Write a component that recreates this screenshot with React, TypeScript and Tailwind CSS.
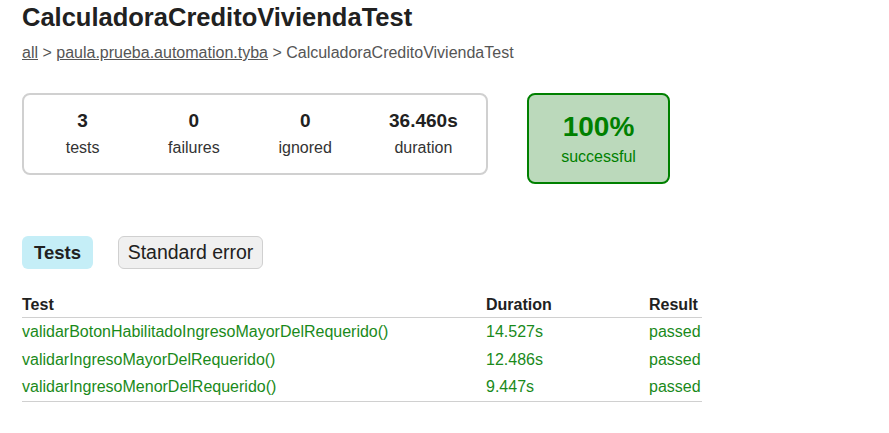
import React from 'react';

const counters = [
    { value: '3', label: 'tests', w: 'w-[112px]' },
    { value: '0', label: 'failures', w: 'w-[112px]' },
    { value: '0', label: 'ignored', w: 'w-[112px]' },
    { value: '36.460s', label: 'duration', w: 'w-[126px]' },
];

const rows = [
    { name: 'validarBotonHabilitadoIngresoMayorDelRequerido()', duration: '14.527s' },
    { name: 'validarIngresoMayorDelRequerido()', duration: '12.486s' },
    { name: 'validarIngresoMenorDelRequerido()', duration: '9.447s' },
];

const App: React.FC = () => {
    return (
        <div className="min-h-[433px] w-[889px] bg-white pl-[22px] text-[#212121] font-['Liberation_Sans',Arial,sans-serif]">
            {/* Header */}
            <h1 className="pt-[2px] text-[25.5px] font-bold leading-[30px]">CalculadoraCreditoViviendaTest</h1>
            <div className="mt-[11px] text-[16px] leading-[20px] text-[#555]">
                <a className="underline">all</a> &gt; <a className="underline">paula.prueba.automation.tyba</a> &gt; CalculadoraCreditoViviendaTest
            </div>

            {/* Summary */}
            <div className="mt-[30px] flex items-start gap-[39px]">
                <div className="flex h-[82px] w-[466px] items-center rounded-[8px] border-2 border-[#d0d0d0] pl-[3px]">
                    {counters.map((c) => (
                        <div key={c.label} className={`${c.w} text-center`}>
                            <div className="text-[19px] font-bold leading-[22px]">{c.value}</div>
                            <div className="mt-[6px] text-[16px] leading-[20px] text-[#333]">{c.label}</div>
                        </div>
                    ))}
                </div>
                <div className="flex h-[91px] w-[143px] flex-col items-center justify-center rounded-[8px] border-2 border-[#008000] bg-[#bbd9bb] text-[#008000]">
                    <div className="text-[28px] font-bold leading-[32px]">100%</div>
                    <div className="mt-[4px] text-[16px] leading-[20px]">successful</div>
                </div>
            </div>

            {/* Tabs */}
            <div className="mt-[52px] flex gap-[25px]">
                <div className="flex h-[33px] w-[71px] items-center justify-center rounded-[6px] bg-[#c5eef7] text-[18.5px] font-bold">Tests</div>
                <div className="flex h-[33px] w-[145px] items-center justify-center rounded-[6px] border border-[#d0d0d0] bg-[#f0f0f0] text-[19.5px]">Standard error</div>
            </div>

            {/* Table */}
            <table className="mt-[26px] w-[680px] border-collapse text-[16px]">
                <thead>
                    <tr className="border-b border-[#d0d0d0]">
                        <th className="w-[464px] pb-[2px] text-left font-bold leading-[20px]">Test</th>
                        <th className="w-[163px] pb-[2px] text-left font-bold leading-[20px]">Duration</th>
                        <th className="pb-[2px] text-left font-bold leading-[20px]">Result</th>
                    </tr>
                </thead>
                <tbody className="border-b border-[#d0d0d0] text-[#1a8a1a]">
                    {rows.map((r) => (
                        <tr key={r.name}>
                            <td className="h-[28px] leading-[20px]">{r.name}</td>
                            <td className="h-[28px] leading-[20px]">{r.duration}</td>
                            <td className="h-[28px] leading-[20px]">passed</td>
                        </tr>
                    ))}
                </tbody>
            </table>
        </div>
    );
};

export default App;
